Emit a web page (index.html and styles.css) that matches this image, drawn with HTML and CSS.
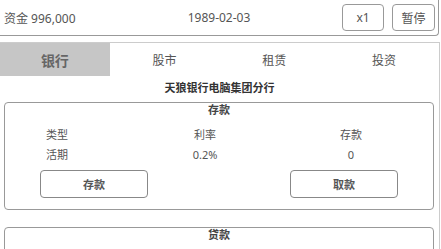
FILE: index.html
```html
<!DOCTYPE html>
<html lang="zh-CN">
<head>
<meta charset="utf-8">
<title>银行</title>
<link rel="stylesheet" href="styles.css">
</head>
<body>
<header class="topbar">
  <span class="funds">资金 996,000</span>
  <span class="date">1989-02-03</span>
  <div class="controls">
    <button class="ctl ctl-speed">x1</button>
    <button class="ctl ctl-pause">暂停</button>
  </div>
</header>
<main class="main">
  <nav class="tabs">
    <div class="tab active">银行</div>
    <div class="tab">股市</div>
    <div class="tab">租赁</div>
    <div class="tab">投资</div>
  </nav>
  <div class="bank-name">天狼银行电脑集团分行</div>
  <section class="card">
    <div class="card-title">存款</div>
    <div class="info">
      <div class="cell">类型</div>
      <div class="cell">利率</div>
      <div class="cell">存款</div>
      <div class="cell">活期</div>
      <div class="cell">0.2%</div>
      <div class="cell">0</div>
    </div>
    <div class="actions">
      <button class="act">存款</button>
      <button class="act">取款</button>
    </div>
  </section>
  <section class="card card-loan">
    <div class="card-title">贷款</div>
  </section>
</main>
</body>
</html>
```
FILE: styles.css
```css
* { box-sizing: border-box; }
html, body { margin: 0; padding: 0; background: #fff; overflow: hidden; }
body {
  font-family: "Noto Sans", "Noto Sans CJK SC", sans-serif;
  color: #555;
  width: 441px;
  height: 249px;
}
.topbar {
  width: 439px;
  height: 36px;
  border-right: 1px solid #999;
  border-bottom: 1px solid #999;
  border-bottom-right-radius: 4px;
  display: grid;
  grid-template-columns: 1fr auto 1fr;
  align-items: center;
}
.funds { padding-left: 4px; font-size: 12px; color: #555; }
.date { font-size: 12px; color: #555; }
.controls {
  display: flex;
  justify-content: flex-end;
  gap: 8px;
  padding-right: 3px;
}
.ctl {
  height: 27px;
  background: #fff;
  border: 1px solid #999;
  border-radius: 4px;
  font-family: inherit;
  font-size: 12px;
  color: #555;
  padding: 0;
}
.ctl-speed { width: 42px; }
.ctl-pause { width: 43px; }
.main {
  margin-top: 6px;
  width: 440px;
  height: 207px;
  overflow: hidden;
  border-top: 1px solid #ccc;
  border-right: 1px solid #ccc;
}
.tabs {
  display: grid;
  grid-template-columns: repeat(4, 1fr);
  height: 33px;
}
.tab {
  display: flex;
  align-items: center;
  justify-content: center;
  font-size: 12px;
  color: #555;
}
.tab.active {
  background: #c6c6c6;
  font-size: 14px;
  font-weight: bold;
  color: #666;
}
.bank-name {
  margin-top: 5px;
  text-align: center;
  font-size: 11px;
  line-height: 14px;
  font-weight: bold;
  color: #333;
}
.card {
  margin: 7px 5px 0 4px;
  border: 1px solid #999;
  border-radius: 4px;
  padding-bottom: 11px;
}
.card-title {
  text-align: center;
  font-size: 11px;
  line-height: 14px;
  font-weight: bold;
  color: #444;
}
.info {
  margin-top: 11px;
  display: grid;
  grid-template-columns: 104px 192px 100px;
  row-gap: 6px;
}
.cell {
  text-align: center;
  font-size: 11px;
  line-height: 14px;
  color: #555;
}
.actions {
  margin-top: 8px;
  display: flex;
  justify-content: space-between;
  padding: 0 35px;
}
.act {
  width: 108px;
  height: 28px;
  background: #fff;
  border: 1px solid #888;
  border-radius: 4px;
  font-family: inherit;
  font-size: 11px;
  font-weight: bold;
  color: #555;
  padding: 0;
}
.card-loan {
  margin-top: 17px;
  height: 40px;
}
```
